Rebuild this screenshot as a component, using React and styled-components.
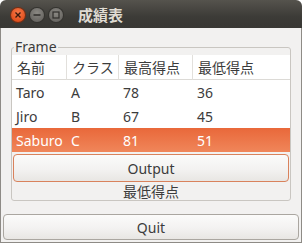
import React from "react";
import styled, { createGlobalStyle } from "styled-components";

const Global = createGlobalStyle`
  html, body { margin: 0; padding: 0; background: #ffffff; }
  body { font-family: "Noto Sans", "Noto Sans CJK JP", sans-serif; }
  * { box-sizing: border-box; }
`;

const Window = styled.div`
  width: 302px;
  height: 243px;
  display: flex;
  flex-direction: column;
  border-radius: 6px 6px 0 0;
  overflow: hidden;
`;

const TitleBar = styled.div`
  height: 28px;
  flex: none;
  display: flex;
  align-items: center;
  padding: 1px 0 0 11px;
  background: linear-gradient(#55534d, #3c3b37 60%, #393834);
`;

const WinButtons = styled.div`
  display: flex;
  gap: 5px;
`;

const WinButton = styled.div`
  width: 14px;
  height: 14px;
  border-radius: 50%;
  display: flex;
  align-items: center;
  justify-content: center;
  background: ${(p) =>
    p.$kind === "close"
      ? "radial-gradient(circle at 50% 35%, #f7794a, #e3501d 70%, #c9441a)"
      : "radial-gradient(circle at 50% 35%, #8a8883, #6a6864 70%, #5c5a56)"};
  box-shadow: 0 0 0 1px ${(p) => (p.$kind === "close" ? "#7a2e12" : "#34332f")};
`;

const Title = styled.div`
  margin-left: 15px;
  color: #dfdbd2;
  font-family: "Noto Sans CJK JP", sans-serif;
  font-weight: 700;
  font-size: 15px;
  line-height: 18px;
`;

const Body = styled.div`
  flex: 1;
  display: flex;
  flex-direction: column;
  gap: 13px;
  padding: 11px 2px 2px;
  background: #f2f1f0;
  border: 1px solid #8e8b86;
  border-top: none;
`;

const Group = styled.fieldset`
  margin: 0 8px;
  padding: 0;
  border: 1px solid #c9c6c1;
  border-radius: 3px;
  display: flex;
  flex-direction: column;
  min-width: 0;
`;

const Legend = styled.legend`
  margin-left: 2px;
  padding: 0 1px;
  font-size: 14px;
  line-height: 16px;
  color: #3c3c3c;
`;

const Table = styled.div`
  display: grid;
  grid-template-columns: 55px 52px 74px 1fr;
  background: #ffffff;
  font-size: 14px;
  color: #3c3c3c;
`;

const HeadCell = styled.div`
  height: 25px;
  display: flex;
  align-items: center;
  padding-left: 5px;
  background: #ffffff;
  border-bottom: 1px solid #dcdad6;
  border-right: ${(p) => (p.$last ? "none" : "1px solid #e2e0dc")};
  color: #3c3c3c;
`;

const Cell = styled.div`
  height: 24px;
  display: flex;
  align-items: center;
  padding-left: 4px;
  color: ${(p) => (p.$selected ? "#ffffff" : "#3c3c3c")};
  background: ${(p) =>
    p.$selected ? "linear-gradient(#e9683a, #f0865a)" : "#ffffff"};
`;

const Button = styled.button`
  font-family: "Noto Sans", "Noto Sans CJK JP", sans-serif;
  font-size: 14px;
  color: #3c3c3c;
  height: ${(p) => p.$h}px;
  margin: ${(p) => p.$m};
  border-radius: 4px;
  border: 1px solid ${(p) => (p.$focus ? "#d9825c" : "#aaa6a0")};
  background: linear-gradient(#fbfbfa, #f3f2f1 55%, #e8e6e3);
  padding: 0;
  display: flex;
  align-items: center;
  justify-content: center;
  cursor: pointer;
`;

const Caption = styled.div`
  height: 18px;
  display: flex;
  align-items: center;
  justify-content: center;
  font-size: 14px;
  color: #3c3c3c;
`;

const headers = ["名前", "クラス", "最高得点", "最低得点"];
const rows = [
  ["Taro", "A", "78", "36"],
  ["Jiro", "B", "67", "45"],
  ["Saburo", "C", "81", "51"],
];

export default function App() {
  return (
    <>
      <Global />
      <Window>
        <TitleBar>
          <WinButtons>
            <WinButton $kind="close">
              <svg width="8" height="8" viewBox="0 0 8 8">
                <path d="M1.5 1.5 L6.5 6.5 M6.5 1.5 L1.5 6.5" stroke="#3a1a0e" strokeWidth="1.4" />
              </svg>
            </WinButton>
            <WinButton $kind="min">
              <svg width="8" height="8" viewBox="0 0 8 8">
                <path d="M0.5 4 H7.5" stroke="#2f2e2b" strokeWidth="1.4" />
              </svg>
            </WinButton>
            <WinButton $kind="max">
              <svg width="8" height="8" viewBox="0 0 8 8">
                <rect x="1" y="1" width="6" height="6" fill="none" stroke="#2f2e2b" strokeWidth="1.2" />
              </svg>
            </WinButton>
          </WinButtons>
          <Title>成績表</Title>
        </TitleBar>
        <Body>
          <Group>
            <Legend>Frame</Legend>
            <Table>
              {headers.map((h, i) => (
                <HeadCell key={h} $last={i === headers.length - 1}>
                  {h}
                </HeadCell>
              ))}
              {rows.map((r, ri) =>
                r.map((c, ci) => (
                  <Cell key={ri + "-" + ci} $selected={ri === 2}>
                    {c}
                  </Cell>
                ))
              )}
            </Table>
            <Button $focus $h={28} $m="2px 1px 0">
              Output
            </Button>
            <Caption>最低得点</Caption>
          </Group>
          <Button $h={26} $m="0">
            Quit
          </Button>
        </Body>
      </Window>
    </>
  );
}
